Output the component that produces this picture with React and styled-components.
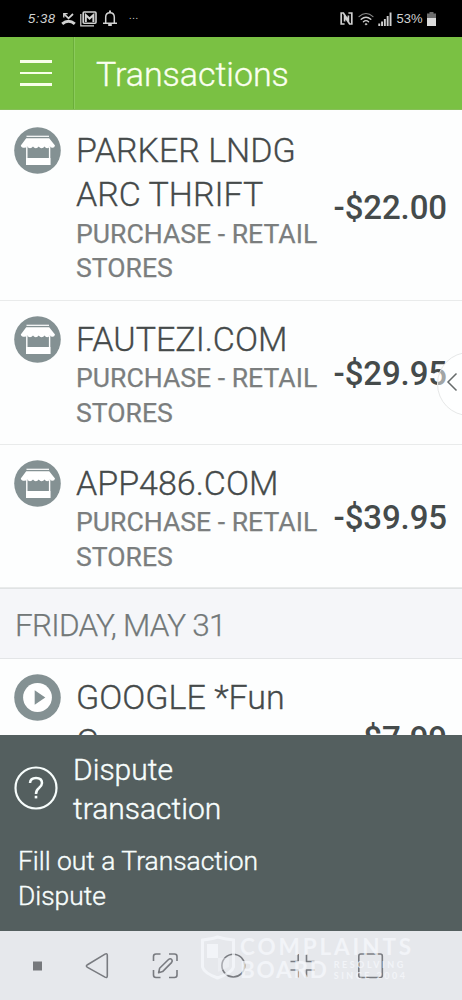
import React from "react";
import styled, { createGlobalStyle } from "styled-components";

const Global = createGlobalStyle`
  *, *::before, *::after { box-sizing: border-box; }
  html, body { margin: 0; padding: 0; }
  body { font-family: Roboto, "Liberation Sans", sans-serif; background: #fdfefe; }
  svg { display: block; flex: none; }
`;

const Screen = styled.div`
  position: relative;
  width: 462px;
  height: 1000px;
  overflow: hidden;
  display: flex;
  flex-direction: column;
  background: #fdfefe;
`;

const StatusBar = styled.header`
  flex: none;
  height: 37px;
  padding: 0 26px 0 28px;
  display: flex;
  align-items: center;
  justify-content: space-between;
  background: #000;
  color: #d2d2d2;
`;

const StatusGroup = styled.div`
  display: flex;
  align-items: center;
  gap: ${(p) => p.$gap}px;
`;

const StatusText = styled.span`
  font-family: "Liberation Sans", sans-serif;
  font-size: 13px;
  line-height: 16px;
  padding-top: 1px;
  font-style: ${(p) => (p.$slanted ? "italic" : "normal")};
  letter-spacing: ${(p) => p.$spacing || 0}px;
  width: ${(p) => p.$width}px;
  white-space: nowrap;
`;

const Dots = styled.span`
  font-size: 10px;
  line-height: 10px;
  margin: -5px 0 0 7px;
  letter-spacing: 0.6px;
`;

const AppBar = styled.nav`
  flex: none;
  height: 73px;
  display: flex;
  background: #7ac143;
  border-bottom: 1px solid #86bf58;
  color: #fbfff0;
`;

const MenuButton = styled.button`
  width: 74px;
  padding: 0 0 0 20px;
  border: 0;
  border-right: 1px solid #6bae3a;
  box-shadow: 1px 0 0 #8bcb5c;
  background: none;
  display: flex;
  flex-direction: column;
  justify-content: center;
  gap: 9px;
`;

const MenuLine = styled.span`
  width: 32px;
  height: 2.7px;
  background: #f8ffe9;
`;

const PageTitle = styled.h1`
  margin: 0;
  padding: 1px 0 0 22px;
  font-size: 34px;
  font-weight: 300;
  line-height: 72px;
  letter-spacing: -0.05px;
  -webkit-text-stroke: 0.35px currentColor;
`;

const List = styled.main`
  flex: none;
  height: 625px;
  overflow: hidden;
  padding-top: 2px;
`;

const Row = styled.article`
  height: ${(p) => p.$height}px;
  padding: 15px 15px 0 14px;
  display: flex;
  border-bottom: 1px solid #e9ebeb;
`;

const RowText = styled.div`
  flex: 1;
  min-width: 0;
  padding: 1px 0 0 15px;
  white-space: nowrap;
`;

const Merchant = styled.div`
  font-size: 34px;
  font-weight: 300;
  line-height: 44.4px;
  color: #454a4a;
  -webkit-text-stroke: 0.3px currentColor;
`;

const Category = styled.div`
  font-size: 26.6px;
  font-weight: 400;
  line-height: 34.5px;
  color: #7b7e7e;
  -webkit-text-stroke: 0.25px currentColor;
`;

const Amount = styled.div`
  align-self: center;
  padding-bottom: ${(p) => p.$lift || 0}px;
  font-size: 33px;
  font-weight: 500;
  line-height: 40px;
  letter-spacing: -0.1px;
  color: #454b4b;
  white-space: nowrap;
`;

const DateHeader = styled.h2`
  margin: 0;
  height: 71px;
  padding: 2px 0 0 15px;
  background: #f5f6f9;
  border-top: 1px solid #e0e3e4;
  border-bottom: 1px solid #e3e5e7;
  font-size: 31.5px;
  font-weight: 300;
  line-height: 70px;
  color: #727878;
  letter-spacing: -0.75px;
  -webkit-text-stroke: 0.25px currentColor;
`;

const Panel = styled.section`
  flex: none;
  height: 196px;
  padding: 15px 14px 0;
  background: #545f5f;
  color: #f7fdfc;
  -webkit-text-stroke: 0.4px currentColor;
`;

const PanelHead = styled.div`
  display: flex;
  gap: 15px;
`;

const PanelTitle = styled.div`
  font-size: 30px;
  font-weight: 300;
  line-height: 39px;
`;

const PanelText = styled.div`
  padding: 16px 0 0 4px;
  font-size: 26.4px;
  font-weight: 300;
  line-height: 34.7px;
`;

const NavBar = styled.footer`
  flex: 1;
  position: relative;
  display: grid;
  grid-template-columns: 52px repeat(5, 68.4px);
  justify-content: start;
  justify-items: center;
  padding: 17px 0 0 11px;
  background: #e6e8ec;
`;

const EdgeHandle = styled.div`
  position: absolute;
  left: 437px;
  top: 352px;
  width: 64px;
  height: 64px;
  border-radius: 50%;
  border: 1.5px solid #e6e8e8;
  background: rgba(255, 255, 255, 0.5);
  padding: 17px 0 0 8px;
`;

const Watermark = styled.div`
  position: absolute;
  left: 200px;
  top: 4px;
  display: flex;
  gap: 4px;
  color: rgba(246, 248, 252, 0.75);
  font-family: Lato, sans-serif;
`;

const MarkLines = styled.div`
  display: flex;
  flex-direction: column;
`;

const MarkLine = styled.div`
  display: flex;
  align-items: center;
  gap: 5px;
  height: 23px;
`;

const MarkWord = styled.span`
  font-size: 22.5px;
  line-height: 23px;
  font-weight: 700;
  letter-spacing: ${(p) => p.$spacing}px;
`;

const MarkSmall = styled.span`
  display: flex;
  flex-direction: column;
  font-size: 9px;
  line-height: 11px;
  font-weight: 700;
  letter-spacing: ${(p) => p.$spacing}px;
`;

const StoreIcon = () => (
  <svg width="47" height="47" viewBox="0 0 47 47">
    <circle cx="23.5" cy="23.5" r="23.3" fill="#849193" />
    <path d="M12.5 9.3H35" stroke="#fff" strokeWidth="1.2" />
    <path
      d="M12.2 11.2H35.2L41 18.5Q40.6 20.8 38.6 20.8T36 19.6Q35 21.2 33.2 21.2T30.6 19.6Q29.4 21.2 27.6 21.2T24.8 19.6Q23.5 21.2 21.8 21.2T19 19.6Q17.8 21.2 16 21.2T13.2 19.6Q12.3 20.8 10.4 20.8Q7.2 20.8 6.8 18.5Z"
      fill="#fff"
    />
    <path d="M12.8 20V38M35.6 20V38" stroke="#fff" strokeWidth="1.4" />
    <path d="M12 31H36.4V38H12Z" fill="#fff" />
  </svg>
);

const PlayIcon = () => (
  <svg width="47" height="47" viewBox="0 0 47 47">
    <circle cx="23.5" cy="23.5" r="23.3" fill="#849193" />
    <circle cx="23.5" cy="23.5" r="14.4" fill="#fff" />
    <path d="M20.7 16.2V30.8L31.3 23.5Z" fill="#849193" />
  </svg>
);

const MissedCall = () => (
  <svg width="15" height="14" viewBox="0 0 15 14" fill="none" stroke="#d2d2d2">
    <path d="M3.2 2.2L7.5 6.3L12 2" strokeWidth="1.8" />
    <path d="M2.8 5.4V1.6H6.6" strokeWidth="1.4" />
    <path d="M1.2 11.8Q7.5 6.6 13.8 11.8" strokeWidth="3" />
  </svg>
);

const MailStack = () => (
  <svg width="17" height="16" viewBox="0 0 17 16" fill="none" stroke="#d2d2d2">
    <path d="M.8 3V14.8H14" strokeWidth="1.2" />
    <rect x="3.2" y="1" width="12.8" height="11.2" rx="1" strokeWidth="1.6" />
    <path d="M5.8 11V4L9.6 7.6L13.4 4V11" strokeWidth="2" />
  </svg>
);

const Bell = () => (
  <svg width="16" height="17" viewBox="0 0 16 17" fill="none" stroke="#d2d2d2">
    <path d="M3.7 12.8V7.2Q3.7 2.8 8 2.8T12.3 7.2V12.8M1 13.2H15" strokeWidth="1.5" />
    <path d="M8 .6V3" strokeWidth="2" />
    <path d="M6.2 15H9.8" strokeWidth="2" />
  </svg>
);

const Nfc = () => (
  <svg width="13" height="13" viewBox="0 0 13 13" fill="none" stroke="#d0d0d0">
    <path d="M4.6 12H1.2V1H3.4L8.4 8.4V3.6" strokeWidth="1.7" />
    <path d="M8.4 1H11.8V12H9.6L4.6 4.6V9.4" strokeWidth="1.7" />
  </svg>
);

const Wifi = () => (
  <svg width="16" height="14" viewBox="0 0 16 14" fill="none" stroke="#d0d0d0" strokeLinecap="round">
    <path d="M1 4.6Q8-1.6 15 4.6" strokeWidth="1.1" stroke="#8b8b8b" />
    <path d="M3.2 7.3Q8 3 12.8 7.3" strokeWidth="1.4" />
    <path d="M5.4 9.8Q8 7.6 10.6 9.8" strokeWidth="1.3" />
    <circle cx="8" cy="12.2" r=".8" fill="#d0d0d0" strokeWidth=".6" />
  </svg>
);

const Signal = () => (
  <svg width="14" height="14" viewBox="0 0 14 14" fill="#d0d0d0">
    <path d="M.3 11.5h1.9V14H.3zM3.1 9.5H5V14H3.1zM5.900 7h1.900v7H5.900zM8.700 4h1.900v10H8.700zM11.600.6h1.900V14h-1.900z" />
  </svg>
);

const Battery = () => (
  <svg width="9" height="14" viewBox="0 0 9 14">
    <path d="M2.5 0h4v1.5H9V6H0V1.5h2.5z" fill="#6e6e6e" />
    <path d="M0 6H9V14H0Z" fill="#dcdcdc" />
  </svg>
);

const HelpSvg = styled.svg`
  margin-top: 16px;
`;

const HelpIcon = () => (
  <HelpSvg width="44" height="44" viewBox="0 0 44 44" fill="none" stroke="#f7fdfc">
    <circle cx="22" cy="22" r="20.5" strokeWidth="2.2" />
    <path d="M16 17Q16.3 11.9 22 11.9Q28 11.9 28 17Q28 19.5 25 22Q22 24.3 22 28" strokeWidth="2.5" />
    <path d="M22 29.8V32.4" strokeWidth="2.6" />
  </HelpSvg>
);

const navStroke = { fill: "none", stroke: "#797b80", strokeWidth: 1.6, strokeLinejoin: "round" };

const nav = [
  <rect key="dot" x="13" y="13.5" width="9" height="9" fill="#76787c" stroke="none" />,
  <path key="back" d="M27.3 7.5V27.7Q27.3 30.3 25 29.1L7.500 19.4Q5.300 18.1 7.500 16.7L25 6.1Q27.3 5 27.3 7.5Z" />,
  <g key="edit">
    <path d="M5.5 13V8.500Q5.500 6 8 6H12.500M21 6H26.500Q29 6 29 8.500V13M29 22V27Q29 29.500 26.500 29.500H21M12.500 29.500H8Q5.500 29.500 5.500 27V22" />
    <path d="M10.600 24.800L11.600 20.300L20.500 11.500Q22.300 10 23.700 11.500Q24.900 13 23.500 14.600L14.600 23.600Z" />
  </g>,
  <circle key="home" cx="17.3" cy="17.6" r="11.4" />,
  <path key="collapse" d="M5.5 13.5H13.2V6M21.5 6V13.5H29.5M5.5 22H13.2V29.5M21.5 29.5V22H29.5" />,
  <rect key="recent" x="5.8" y="6" width="23.5" height="23.5" rx="2" />,
];

const shops = [
  { lines: ["PARKER LNDG", "ARC THRIFT"], amount: "-$22.00", height: 189 },
  { lines: ["FAUTEZI.COM"], amount: "-$29.95", height: 144 },
  { lines: ["APP486.COM"], amount: "-$39.95", height: 143 },
];

export default function App() {
  return (
    <Screen>
      <Global />
      <StatusBar>
        <StatusGroup $gap={4.5}>
          <StatusText $slanted $spacing={0.6} $width={28}>5:38</StatusText>
          <MissedCall />
          <MailStack />
          <Bell />
          <Dots>...</Dots>
        </StatusGroup>
        <StatusGroup $gap={4.5}>
          <Nfc />
          <Wifi />
          <Signal />
          <StatusText $width={26}>53%</StatusText>
          <Battery />
        </StatusGroup>
      </StatusBar>
      <AppBar>
        <MenuButton aria-label="Menu">
          <MenuLine />
          <MenuLine />
          <MenuLine />
        </MenuButton>
        <PageTitle>Transactions</PageTitle>
      </AppBar>
      <List>
        {shops.map((s) => (
          <Row key={s.amount} $height={s.height}>
            <StoreIcon />
            <RowText>
              {s.lines.map((l) => (
                <Merchant key={l}>{l}</Merchant>
              ))}
              <Category>PURCHASE - RETAIL</Category>
              <Category>STORES</Category>
            </RowText>
            <Amount $lift={12}>{s.amount}</Amount>
          </Row>
        ))}
        <DateHeader>FRIDAY, MAY 31</DateHeader>
        <Row $height={188}>
          <PlayIcon />
          <RowText>
            <Merchant>GOOGLE *Fun</Merchant>
            <Merchant>G</Merchant>
          </RowText>
          <Amount $lift={43}>$7.99</Amount>
        </Row>
      </List>
      <Panel>
        <PanelHead>
          <HelpIcon />
          <PanelTitle>
            Dispute
            <br />
            transaction
          </PanelTitle>
        </PanelHead>
        <PanelText>
          Fill out a Transaction
          <br />
          Dispute
        </PanelText>
      </Panel>
      <NavBar>
        {nav.map((shape) => (
          <svg key={shape.key} width="35" height="36" viewBox="0 0 35 36" {...navStroke}>
            {shape}
          </svg>
        ))}
        <Watermark>
          <svg width="36" height="46" viewBox="0 0 36 46" fill="none" stroke="currentColor" strokeWidth="3">
            <path d="M2.5 5Q12 4 17.5 2Q24 4 33.5 5V32Q32 38 17.5 43Q4 38 2.5 32Z" />
            <path d="M7 9H18V23H7Z" fill="currentColor" stroke="none" />
            <path d="M18 23H29V32L18 37Z" fill="currentColor" stroke="none" opacity=".5" />
          </svg>
          <MarkLines>
            <MarkLine>
              <MarkWord $spacing={2.9}>COMPLAINTS</MarkWord>
            </MarkLine>
            <MarkLine>
              <MarkWord $spacing={1.8}>BOARD</MarkWord>
              <MarkSmall $spacing={2.5}>
                <span>RESOLVING</span>
                <span>SINCE 2004</span>
              </MarkSmall>
            </MarkLine>
          </MarkLines>
        </Watermark>
      </NavBar>
      <EdgeHandle>
        <svg width="12" height="22" viewBox="0 0 12 22" fill="none" stroke="#666b6b" strokeWidth="1.5">
          <path d="M10.5 3.5L2 12L10.5 20.5" />
        </svg>
      </EdgeHandle>
    </Screen>
  );
}
